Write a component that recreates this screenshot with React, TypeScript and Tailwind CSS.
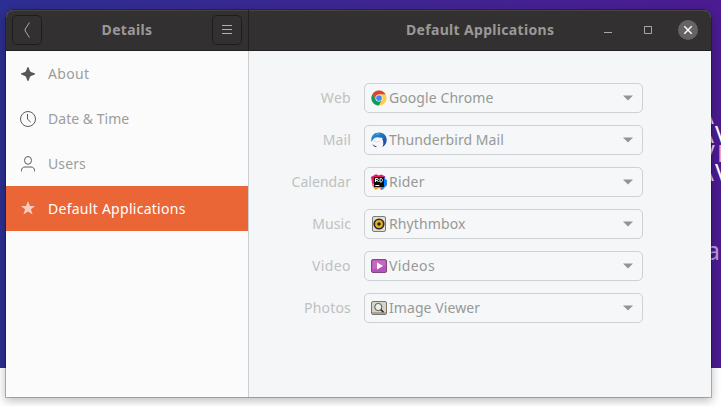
import React from 'react';

type IconProps = { className?: string };

function AboutIcon() {
  return (
    <svg width="16" height="16" viewBox="0 0 16 16" fill="#575757">
      <path d="M8 1C9 1 9.2 4.4 10.4 5.6 11.6 6.8 15 7 15 8s-3.4 1.2-4.6 2.4C9.2 11.6 9 15 8 15s-1.2-3.4-2.4-4.6C4.4 9.2 1 9 1 8s3.4-1.2 4.6-2.4C6.8 4.4 7 1 8 1z" />
    </svg>
  );
}

function ClockIcon() {
  return (
    <svg width="16" height="16" viewBox="0 0 16 16" fill="none" stroke="#5c5c5c">
      <circle cx="8" cy="8" r="7.5" />
      <path d="M7.5 3v5l3.2 3.3" />
    </svg>
  );
}

function UserIcon() {
  return (
    <svg width="16" height="16" viewBox="0 0 16 16" fill="none" stroke="#5c5c5c">
      <ellipse cx="8" cy="4.4" rx="3.5" ry="3.9" />
      <path d="M1.5 15.5v-1c0-2.4 1.5-3.5 3.5-3.5h6c2 0 3.5 1.1 3.5 3.5v1" />
    </svg>
  );
}

function StarIcon() {
  return (
    <svg className="-mt-0.5" width="16" height="16" viewBox="0 0 16 16" fill="#f8cdbf">
      <path d="M8 1l1.9 5H15l-4.1 3.3 1.7 5.3L8 11.6l-4.6 3 1.7-5.3L1 6h5.1z" />
    </svg>
  );
}

function ChromeIcon() {
  return (
    <svg width="16" height="16" viewBox="0 0 16 16">
      <circle cx="8" cy="8" r="7.6" fill="#ffcd40" />
      <path d="M1.4 4.2A7.6 7.6 0 0 1 14.6 4.3H8L4.8 9.8z" fill="#db4437" />
      <path d="M1.4 4.2A7.6 7.6 0 0 0 7.7 15.6L11.1 9.8 8 11.5 4.8 9.8z" fill="#0f9d58" />
      <circle cx="8" cy="8" r="3.6" fill="#f5f7f7" />
      <circle cx="8" cy="8" r="2.85" fill="#4285f4" />
    </svg>
  );
}

function ThunderbirdIcon() {
  return (
    <svg width="16" height="16" viewBox="0 0 16 16">
      <defs>
        <linearGradient id="tb" x1="0" y1="0" x2="1" y2="1">
          <stop offset="0" stopColor="#2e9ad3" />
          <stop offset=".5" stopColor="#1c6fc0" />
          <stop offset="1" stopColor="#2f3596" />
        </linearGradient>
      </defs>
      <path d="M2.5 2.5C4.8.2 10.8-.4 13.8 2.8 17 6.8 16.2 12 11.2 15.2c1-1.7 1.2-3 1-4.2L9 6 3.4 6.2.6 10C-.2 7 .5 4.2 2.5 2.5z" fill="url(#tb)" />
      <path d="M.9 9.8C1.8 7 3.6 5.6 6.2 5.2l3.3.6 2.2-.1-.6 1.2c1.4 1.8 1.6 4.6-.1 6.4-2 2-6.4 1.8-8.5-.5C1.5 11.8 1 10.8.9 9.8z" fill="#f4f7fb" />
      <path d="M2.6 8.7l3 1.3 3.8-1" fill="none" stroke="#c8cde0" strokeWidth=".6" />
      <path d="M5.3 2.2c1-.4 2-.4 3 0" fill="none" stroke="#66c6e8" strokeWidth=".8" />
      <path d="M1.5 12.2l2.7 1.7 1.8.3-1.3.9c-1.4-.5-2.5-1.5-3.2-2.9z" fill="#342270" />
    </svg>
  );
}

function RiderIcon() {
  return (
    <svg width="16" height="16" viewBox="0 0 16 16">
      <path d="M0 3L5 .2l3 1.4 2-1.2 4.2 1.8L14 5l2 5-3 3-5 1-6-1-1-4z" fill="#e81466" />
      <path d="M10.5 3l3-.6 1 3 1.5.6-.3 5.5L13 14l-2-1z" fill="#087cfa" />
      <path d="M1.5 9.5L2 13l2.5 2.7L8 14l3 2 2-3-3-2z" fill="#ff8b23" />
      <path d="M11 12h3.2l-2 3.2L9.5 16z" fill="#2a83ee" />
      <rect x="3" y="3" width="10" height="10" fill="#090909" />
      <path d="M4.5 8V4.5h1.7c1.6 0 1.5 1.9 0 1.9H4.6m1.6 0L7.5 8M9 4.5V8h.8c2.3 0 2.3-3.5 0-3.5zM4.3 11.5h4" fill="none" stroke="#fff" strokeWidth="1" />
    </svg>
  );
}

function RhythmboxIcon() {
  return (
    <svg width="16" height="16" viewBox="0 0 16 16">
      <rect x="1.5" y=".5" width="13" height="15" rx="1.5" fill="#e2dfd7" stroke="#7d7b75" />
      <circle cx="8" cy="8" r="5.6" fill="#292a2a" />
      <circle cx="8" cy="8" r="3.9" fill="#e9b51d" />
      <circle cx="8" cy="8" r="1.8" fill="#242526" />
    </svg>
  );
}

function VideosIcon() {
  return (
    <svg width="16" height="16" viewBox="0 0 16 16">
      <rect x=".5" y="1.5" width="15" height="13" rx="1.5" fill="#b752b8" stroke="#7f477e" />
      <path d="M1.5 2.5h13v5l-13 4z" fill="#c468c3" />
      <path d="M6 4.5v7L12 8z" fill="#fff" />
    </svg>
  );
}

function ViewerIcon() {
  return (
    <svg width="16" height="16" viewBox="0 0 16 16">
      <rect x=".5" y="1.5" width="15" height="13" rx="1.5" fill="#d6d3c8" stroke="#77756e" />
      <path d="M1 12h14v2H1z" fill="#aaa493" />
      <circle cx="7.3" cy="7" r="3.6" fill="#ecece8" stroke="#555651" />
      <path d="M9.8 9.6l2.7 2.7" stroke="#272727" strokeWidth="1.5" />
    </svg>
  );
}

function DownArrow({ className }: IconProps) {
  return (
    <svg className={className} width="10" height="6" viewBox="0 0 10 6">
      <path d="M0 .4h10L5 5.6z" fill="#929595" />
    </svg>
  );
}

const categories = [
  { name: 'About', icon: <AboutIcon />, tracking: 'tracking-[0.35px]' },
  { name: 'Date & Time', icon: <ClockIcon />, tracking: 'tracking-[0.03px]' },
  { name: 'Users', icon: <UserIcon />, tracking: 'tracking-[0.1px]' },
  { name: 'Default Applications', icon: <StarIcon />, tracking: 'tracking-[0.27px]', selected: true },
];

const apps = [
  { kind: 'Web', app: 'Google Chrome', icon: <ChromeIcon />, kt: 'tracking-[0.3px]', at: 'tracking-[0.08px]' },
  { kind: 'Mail', app: 'Thunderbird Mail', icon: <ThunderbirdIcon />, kt: 'tracking-[0.1px]', at: 'tracking-[0.07px]' },
  { kind: 'Calendar', app: 'Rider', icon: <RiderIcon />, kt: 'tracking-[0.05px]', at: 'tracking-[0.2px]' },
  { kind: 'Music', app: 'Rhythmbox', icon: <RhythmboxIcon />, kt: 'tracking-[0.05px]', at: 'tracking-[0.12px]' },
  { kind: 'Video', app: 'Videos', icon: <VideosIcon />, kt: 'tracking-[0.4px]', at: 'tracking-[0.4px]' },
  { kind: 'Photos', app: 'Image Viewer', icon: <ViewerIcon />, kt: 'tracking-[0.2px]', at: 'tracking-[0.08px]' },
];

function Desktop() {
  return (
    <div className="absolute inset-x-0 top-0 h-[368px] overflow-hidden bg-linear-to-r from-[#2c2e91] to-[#4b1b91] text-[24px] leading-[19px] text-[#e8ddf5]">
      <span className="absolute left-[705px] top-[105px]">\</span>
      <span className="absolute left-[705px] top-[124px]">\</span>
      <span className="absolute left-[715px] top-[124px] text-white">V</span>
      <span className="absolute left-[706px] top-[143px]">/</span>
      <span className="absolute left-[717px] top-[143px] font-['Open_Sans'] text-[#f2a7c7]">I</span>
      <span className="absolute left-[705px] top-[162px]">\</span>
      <span className="absolute left-[715px] top-[162px] text-white">V</span>
      <span className="absolute left-[706px] top-[236px] text-[25px] leading-[28px] text-[#b99bd6]">a</span>
    </div>
  );
}

export default function App() {
  return (
    <div className="relative flex h-[406px] w-[721px] overflow-hidden bg-white pl-1.5 pt-2.5 font-['Noto_Sans','Open_Sans',sans-serif] text-[14px]">
      <Desktop />
      <main className="relative flex h-[387px] w-[705px] flex-col rounded-t-lg bg-[#f5f6f7] shadow-[0_0_0_1px_rgba(0,0,0,0.24),0_3px_10px_1px_rgba(0,0,0,0.25)]">
        <header className="flex h-[41px] shrink-0 rounded-t-lg border-b border-[#211f20] bg-[#333031] font-bold text-[#9b9996] shadow-[inset_0_1px_0_#454240]">
          <div className="flex w-[243px] items-center justify-between border-r border-[#211f20] pl-1.5 pr-1.5">
            <button className="flex h-[30px] w-[30px] items-center justify-center rounded-[5px] border border-[#1e1c1d]" aria-label="Back">
              <svg width="16" height="16" viewBox="0 0 16 16" fill="none" stroke="#aaa8a7">
                <path d="M10.5.5L6.2 7v2l4.3 6.5" />
              </svg>
            </button>
            <h2 className="pb-0.5 tracking-[0.35px]">Details</h2>
            <button className="flex h-[30px] w-[30px] items-center justify-center rounded-[5px] border border-[#1e1c1d]" aria-label="Menu">
              <svg width="16" height="16" viewBox="0 0 16 16" stroke="#b0aead">
                <path d="M3 3.5h10M3 7.5h10M3 11.5h10" />
              </svg>
            </button>
          </div>
          <div className="flex flex-1 items-center pl-[157px]">
            <h1 className="w-[149px] whitespace-nowrap pb-0.5 tracking-[0.32px]">Default Applications</h1>
            <div className="ml-auto flex items-center gap-5 pr-[13px]">
              <svg width="20" height="20" viewBox="0 0 20 20" stroke="#aaa8a7"><path d="M6 12.5h8" /></svg>
              <svg width="20" height="20" viewBox="0 0 20 20" fill="none" stroke="#aaa8a7"><path d="M6.5 6.5h7v7h-7z" /></svg>
              <svg width="20" height="20" viewBox="0 0 20 20">
                <circle cx="10" cy="10" r="10" fill="#656463" />
                <path d="M6.3 6.3l7.4 7.4m0-7.4l-7.4 7.4" stroke="#fff" strokeWidth="1.4" />
              </svg>
            </div>
          </div>
        </header>
        <div className="flex min-h-0 flex-1">
          <nav className="w-[243px] border-r border-[#cdd0d3] bg-[#fbfbfb]">
            {categories.map((item) => (
              <div
                key={item.name}
                className={`flex h-[45px] items-center gap-3 pl-[14px] ${item.selected ? 'bg-[#eb6637] text-white' : 'text-[#9c9d9c]'}`}
              >
                {item.icon}
                <span className={item.tracking}>{item.name}</span>
              </div>
            ))}
          </nav>
          <section className="flex flex-1 flex-col gap-3 bg-[#f4f6f7] pt-8">
            {apps.map((row) => (
              <div key={row.kind} className="flex h-[30px] items-center">
                <label className={`w-[103px] pb-0.5 pr-px text-right text-[#bfc1c0] ${row.kt}`}>{row.kind}</label>
                <button className="ml-3 flex h-[30px] w-[279px] items-center rounded-[5px] border border-[#cdd1d4] bg-[#f5f7f8] pl-1.5 pr-[9px] text-[#979997]">
                  {row.icon}
                  <span className={`ml-0.5 pb-0.5 ${row.at}`}>{row.app}</span>
                  <DownArrow className="ml-auto" />
                </button>
              </div>
            ))}
          </section>
        </div>
      </main>
    </div>
  );
}
